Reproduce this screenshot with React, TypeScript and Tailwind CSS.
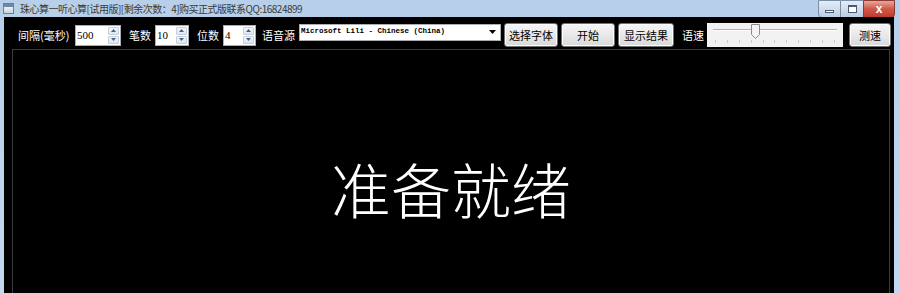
const cjk = { fontFamily: '"Noto Sans CJK SC", "Liberation Sans", sans-serif' };

function Spin({ value, width }: { value: string; width: string }) {
  return (
    <div className={`flex h-[21px] ${width} bg-white border border-[#abadb3]`}>
      <div
        className="flex-1 pl-[1px] text-[11px] leading-[19px] text-black"
        style={{ fontFamily: '"Liberation Serif", serif' }}
      >
        {value}
      </div>
      <div className="flex w-[13px] flex-col gap-[1px] p-[1px]">
        <div className="flex flex-1 items-center justify-center rounded-[1px] bg-gradient-to-b from-[#f3f6fb] to-[#dde6f1] border border-[#c4d0de]">
          <svg width="5" height="3" viewBox="0 0 5 3">
            <path d="M0 3 L2.5 0 L5 3 Z" fill="#4d6185" />
          </svg>
        </div>
        <div className="flex flex-1 items-center justify-center rounded-[1px] bg-gradient-to-b from-[#f3f6fb] to-[#dde6f1] border border-[#c4d0de]">
          <svg width="5" height="3" viewBox="0 0 5 3">
            <path d="M0 0 L2.5 3 L5 0 Z" fill="#4d6185" />
          </svg>
        </div>
      </div>
    </div>
  );
}

function Btn({ label, width }: { label: string; width: string }) {
  return (
    <button
      className={`h-[24px] ${width} rounded-[3px] border border-[#707070] bg-gradient-to-b from-[#f6f6f6] via-[#e9e9e9] to-[#d8d8d8] text-[11px] text-black shadow-[inset_0_0_0_1px_#fcfcfc]`}
      style={cjk}
    >
      {label}
    </button>
  );
}

function Label({ text, width }: { text: string; width: string }) {
  return (
    <div className={`${width} text-[11px] text-white whitespace-nowrap`} style={cjk}>
      {text}
    </div>
  );
}

export default function App() {
  const ticks = [0, 1, 2, 3, 4, 5, 6, 7, 8, 9, 10];
  return (
    <div className="flex h-[293px] w-[900px] flex-col overflow-hidden bg-gradient-to-b from-[#b7cfe9] to-[#c3d8ee]">
      {/* title bar */}
      <div className="flex h-[17px] items-start">
        <div className="ml-[3px] mt-[3px] h-[11px] w-[11px] border border-[#6d7e94] bg-gradient-to-b from-[#ffffff] to-[#c9d3de]">
          <div className="h-[3px] bg-[#6f87a8]" />
        </div>
        <div className="ml-[6px] mt-[1px] text-[10px] leading-[15px] tracking-[-0.5px] text-[#3a3a3a]" style={cjk}>
          珠心算一听心算[试用版][剩余次数：4]购买正式版联系QQ:16824899
        </div>
        <div className="ml-auto mr-[5px] flex h-[18px]">
          <div className="flex w-[23px] items-center justify-center rounded-bl-[4px] border border-[#7a8ea8] bg-gradient-to-b from-[#e4edf7] to-[#bccde2]">
            <div className="mt-[5px] h-[3px] w-[9px] border border-[#4a5b75] bg-white" />
          </div>
          <div className="flex w-[22px] items-center justify-center border-y border-[#7a8ea8] bg-gradient-to-b from-[#e4edf7] to-[#bccde2]">
            <div className="h-[8px] w-[9px] border border-[#4a5b75] border-t-[2px] bg-white" />
          </div>
          <div className="flex w-[32px] items-center justify-center rounded-br-[4px] border border-[#8b3a33] bg-gradient-to-b from-[#e8a59b] via-[#d0574a] to-[#c23b2d]">
            <span className="text-[12px] font-bold leading-none text-white" style={{ fontFamily: '"Liberation Sans", sans-serif' }}>
              x
            </span>
          </div>
        </div>
      </div>

      {/* client area */}
      <div className="ml-[4px] mr-[6px] flex flex-1 flex-col bg-black">
        <div className="flex h-[32px] items-center pl-[14px] pt-[4px]">
          <Label text="间隔(毫秒)" width="w-[57px]" />
          <Spin value="500" width="w-[46px]" />
          <div className="w-[8px]" />
          <Label text="笔数" width="w-[26px]" />
          <Spin value="10" width="w-[34px]" />
          <div className="w-[8px]" />
          <Label text="位数" width="w-[26px]" />
          <Spin value="4" width="w-[33px]" />
          <div className="w-[6px]" />
          <Label text="语音源" width="w-[37px]" />
          <div className="mb-[6px] flex h-[17px] w-[202px] items-center border border-[#abadb3] bg-white">
            <div
              className="flex-1 whitespace-nowrap pl-[1px] text-[7.5px] font-bold leading-none text-black"
              style={{ fontFamily: '"Liberation Mono", monospace' }}
            >
              Microsoft Lili - Chinese (China)
            </div>
            <svg width="7" height="4" viewBox="0 0 7 4" className="mr-[4px]">
              <path d="M0 0 L7 0 L3.5 4 Z" fill="#000" />
            </svg>
          </div>
          <div className="w-[3px]" />
          <Btn label="选择字体" width="w-[54px]" />
          <div className="w-[3px]" />
          <Btn label="开始" width="w-[54px]" />
          <div className="w-[3px]" />
          <Btn label="显示结果" width="w-[56px]" />
          <div className="w-[8px]" />
          <Label text="语速" width="w-[25px]" />
          <div className="relative h-[24px] w-[136px] bg-[#f2f2f2]">
            <div className="absolute left-[6px] right-[6px] top-[6px] h-[2px] border-t border-[#b0b0b0] border-b border-b-white" />
            <svg className="absolute left-[44px] top-[1px]" width="9" height="15" viewBox="0 0 9 15">
              <path d="M0.5 0.5 H8.5 V10.5 L4.5 14.5 L0.5 10.5 Z" fill="#f4f4f4" stroke="#8c8c8c" />
            </svg>
            <div className="absolute bottom-[4px] left-[8px] right-[8px] flex justify-between">
              {ticks.map((t) => (
                <div key={t} className="h-[3px] w-[1px] bg-[#c8c8c8]" />
              ))}
            </div>
          </div>
          <div className="w-[6px]" />
          <Btn label="测速" width="w-[42px]" />
        </div>

        <div className="ml-[8px] mr-[4px] flex flex-1 items-center justify-center border-l border-r border-t border-[#3c3c3c] pt-[32px]">
          <div className="text-[60px] font-light leading-none text-white" style={cjk}>
            准备就绪
          </div>
        </div>
      </div>
    </div>
  );
}
